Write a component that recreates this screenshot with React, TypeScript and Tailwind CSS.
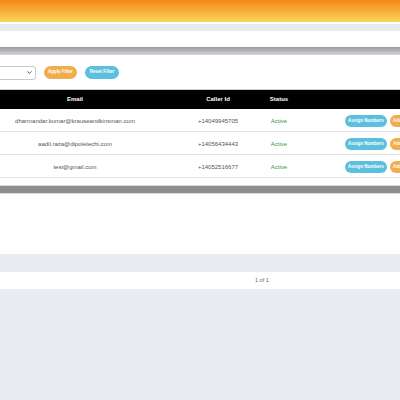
import { ChevronDown } from "lucide-react"

const rows = [
    { email: "dharmandar.kumar@krauseandkinsman.com", caller: "+14049945705", status: "Active" },
    { email: "aadil.raza@dipoletechi.com", caller: "+14056434443", status: "Active" },
    { email: "test@gmail.com", caller: "+14052516677", status: "Active" },
]

const cols = "grid grid-cols-[150px_40px_56px_66px_1fr]"

export default function App() {
    return (
        <div className="w-[400px] h-[400px] overflow-hidden bg-[#e9ecf1] font-['Liberation_Sans',Arial,sans-serif]">
            <div className="h-[22px] bg-gradient-to-b from-[#f2870e] to-[#f8d55c]" />
            <div className="h-[2px] bg-white" />
            <div className="h-[7px] bg-[#e8ebef]" />
            <div className="h-[16px] bg-white" />
            <div className="h-[8px] bg-gradient-to-b from-[#979a9e] to-[#d4d6d9]" />

            <div className="bg-white">
                <div className="flex items-center gap-[8px] h-[34px] pt-px">
                    <div className="w-[37px] h-[14px] -ml-px border border-[#c8c8c8] rounded-r-[3px] flex items-center justify-end pr-[2px]">
                        <ChevronDown size={7} strokeWidth={3} className="text-[#444]" />
                    </div>
                    <button className="w-[33px] h-[13px] rounded-full bg-[#f0ad4e] text-white text-[4.5px] font-bold">Apply Filter</button>
                    <button className="w-[34px] h-[13px] rounded-full bg-[#5bc0de] text-white text-[4.5px] font-bold">Reset Filter</button>
                </div>

                <div className="h-px bg-[#cfcfcf]" />
                <div className={`${cols} h-[19px] bg-black text-white text-[6px] font-bold items-center`}>
                    <div className="text-center">Email</div>
                    <div />
                    <div className="text-center">Caller Id</div>
                    <div className="text-center">Status</div>
                    <div />
                </div>

                {rows.map((r) => (
                    <div key={r.email} className={`${cols} h-[23px] pt-[2px] items-center border-b border-[#e2e2e2] text-[6px] text-[#555]`}>
                        <div className="text-center whitespace-nowrap">{r.email}</div>
                        <div />
                        <div className="text-center">{r.caller}</div>
                        <div className="text-center text-[#3a9a3a]">{r.status}</div>
                        <div className="flex items-center gap-[3px] pl-[33px] overflow-hidden">
                            <button className="w-[42px] h-[12px] shrink-0 rounded-full bg-[#5bc0de] text-white text-[4.5px] font-bold">Assign Numbers</button>
                            <button className="w-[42px] h-[12px] shrink-0 rounded-full bg-[#f0ad4e] text-white text-[4.5px] font-bold text-left pl-[3px]">Add</button>
                        </div>
                    </div>
                ))}

                <div className="h-[7px]" />
                <div className="h-px bg-[#d8d8d8]" />
                <div className="h-[7px] bg-[#8d8d8d]" />
                <div className="h-px bg-[#d8d8d8]" />
                <div className="h-[60px]" />
            </div>

            <div className="h-[18px] bg-[#e9ecf1]" />
            <div className="h-[17px] bg-white flex items-center pl-[255px] text-[5.5px] text-[#666]">1 of 1</div>
        </div>
    )
}
